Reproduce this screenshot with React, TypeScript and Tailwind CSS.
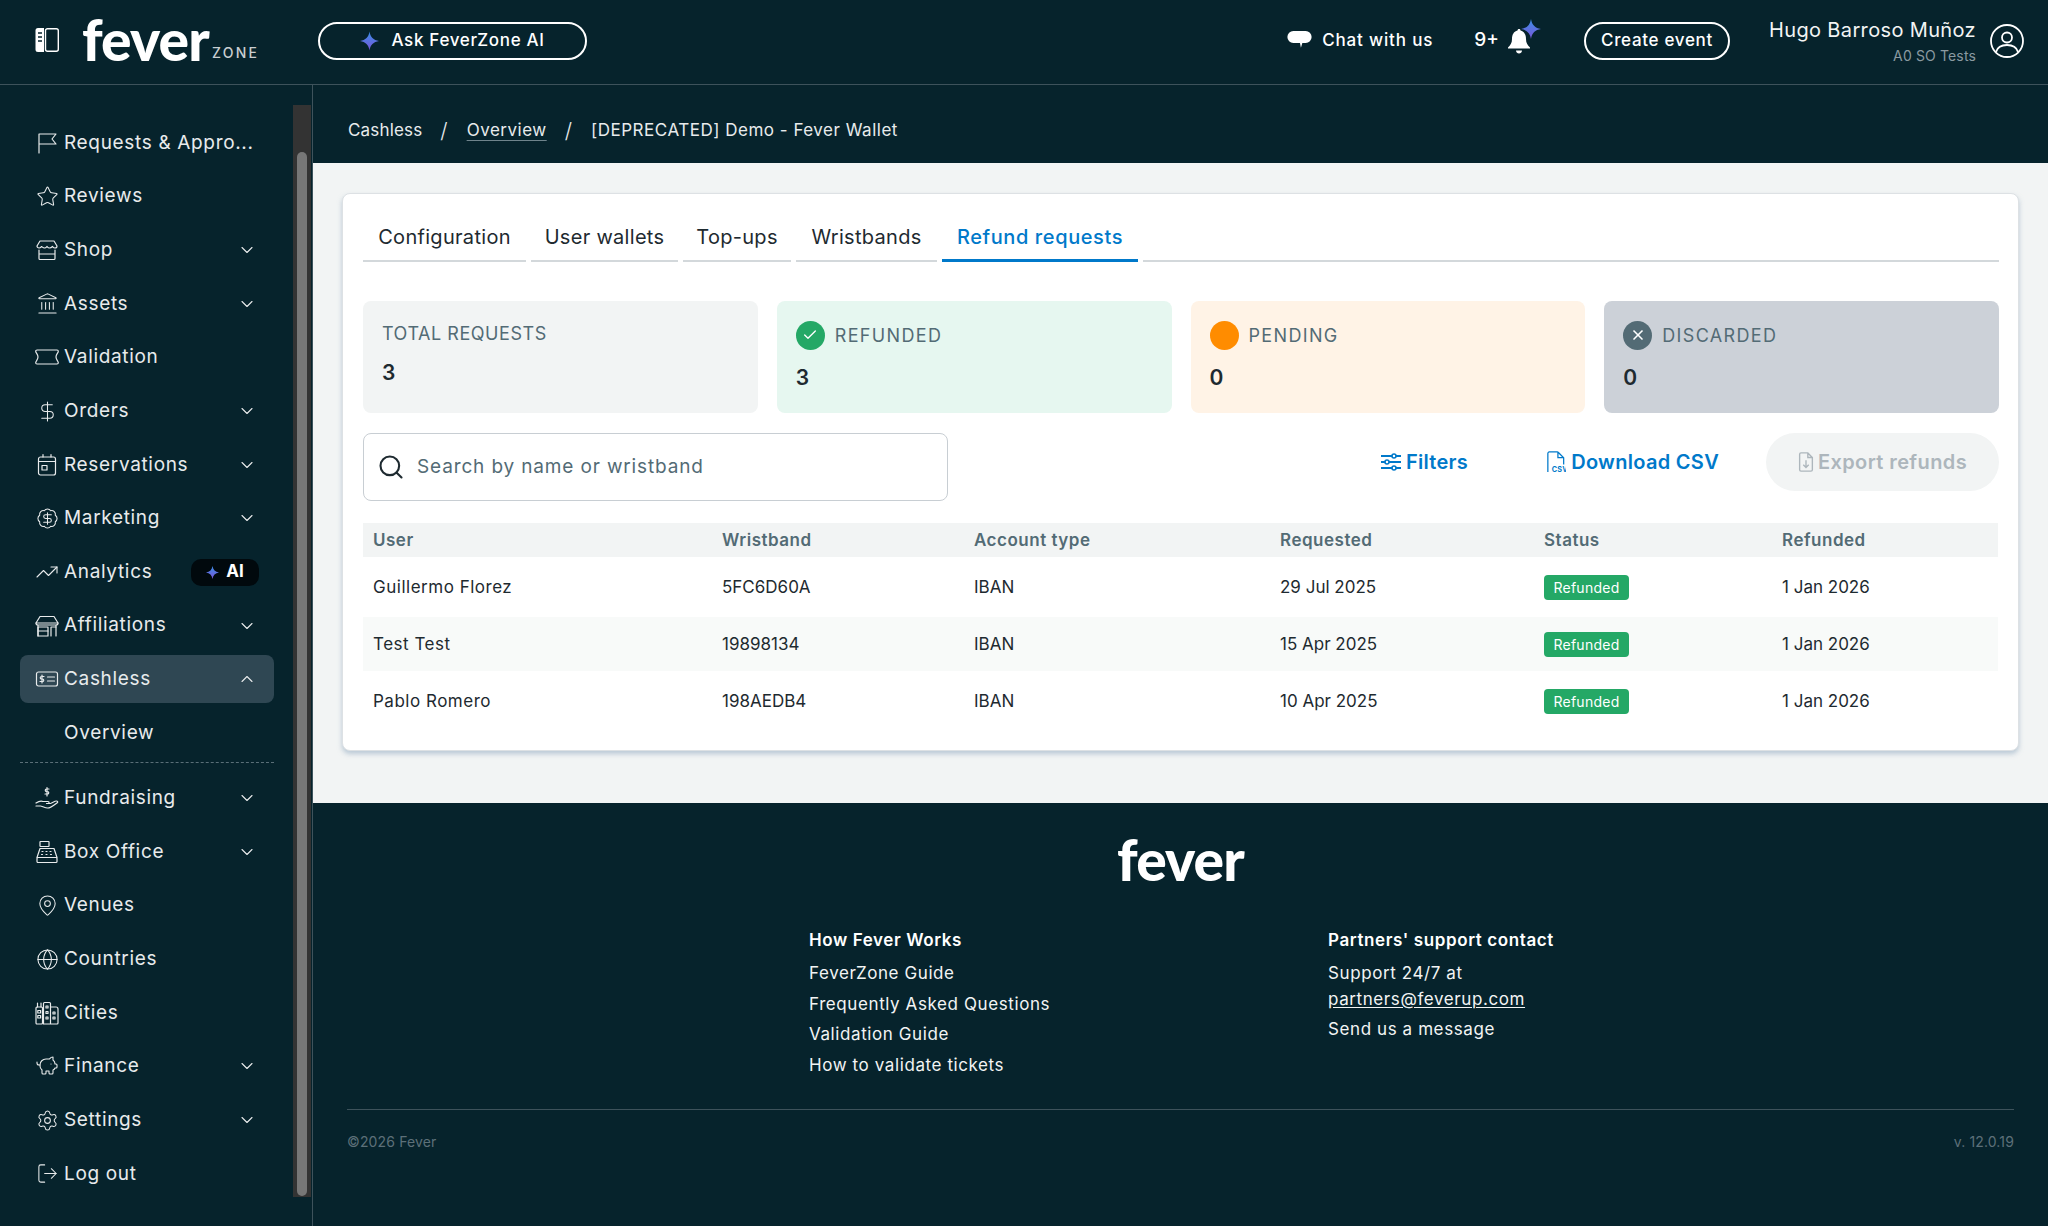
import React from "react";
import { Star, Landmark, BadgeDollarSign, TrendingUp, MapPin, Globe, PiggyBank, Settings, LogOut, ChevronDown, ChevronUp, Search, Check, X, DollarSign } from "lucide-react";

const S = ({ children, className = "w-6 h-6", vb = "0 0 24 24" }: { children: React.ReactNode; className?: string; vb?: string }) => (
  <svg viewBox={vb} fill="none" stroke="currentColor" strokeWidth={1.2} strokeLinecap="round" strokeLinejoin="round" className={className}>{children}</svg>
);

const Sparkle = ({ className, id }: { className: string; id: string }) => (
  <svg viewBox="0 0 24 24" className={className}>
    <defs>
      <linearGradient id={id} x1="0" y1="0" x2="0" y2="1">
        <stop offset="0" stopColor="#3b8fe8" />
        <stop offset="1" stopColor="#7a55d8" />
      </linearGradient>
    </defs>
    <path d="M12 0C13 7 17 11 24 12C17 13 13 17 12 24C11 17 7 13 0 12C7 11 11 7 12 0Z" fill={`url(#${id})`} />
  </svg>
);

const FlagI = () => <S><path d="M4 22V3h17l-4 5 4 5H4" /></S>;
const ShopI = () => <S><path d="M5 3h14l3 5c0 1-1 2-2 2-1.500 0-2-1-2.500-1.500C17 9 16 10 14.500 10S12.500 9 12 8.500C11.500 9 11 10 9.500 10S7.500 9 6.500 8.500C6 9 5.500 10 4 10 3 10 2 9 2 8Z" /><path d="M4 12v8.500c0 .5.500 1 1 1h14c.5 0 1-.5 1-1V12M4 16h16" /></S>;
const TicketI = () => <S><path d="M2 5h20c.7 0 1.300.5 1.300 1.200 0 1.800-2.300 3-2.300 5.800s2.300 4 2.300 5.800c0 .7-.6 1.200-1.300 1.200H2c-.7 0-1.300-.5-1.300-1.200C.7 16 3 14.800 3 12S.7 8 .7 6.200C.7 5.500 1.300 5 2 5Z" /></S>;
const CalI = () => <S><rect x="3.500" y="4" width="17" height="18" rx="2" /><path d="M3.500 8.500h17M8 1.500V4M16 1.500V4" /><rect x="7" y="12.500" width="5" height="4.500" /></S>;
const StoreI = () => <S><path d="M5 2.500h14l4 6.500H1Z" /><path d="M1 9c0 1.500 1 2 2 2h18c1 0 2-.5 2-2M3 11v11M21 11v11" /><rect x="3" y="13" width="10" height="9" /><path d="M3 17h10M16 22v-9h5" /></S>;
const CashI = () => <S><rect x="1.500" y="5" width="21" height="14" rx="2" /><path d="M12.500 10h7M12.500 14h7M9 9.500H6.500a1.200 1.200 0 0 0 0 2.500h1a1.200 1.200 0 0 1 0 2.500H5M7 8v8" /></S>;
const HandI = () => <S><path d="M1 20h4.500c1 0 5 2 7 2 3 0 8-4 10-5.500.5-.5 0-1.500-1-1.500-2 0-4 2-6 2.500h-4M1 17c3-2 5-2.500 7-1.500h5c1.500 0 1.500 2 0 2" /><path d="M14 3h-2.500a1.200 1.200 0 0 0 0 2.500h1a1.200 1.200 0 0 1 0 2.500H10M12 1.500V10" /></S>;
const RegisterI = () => <S><rect x="5" y="1.500" width="9" height="5" rx=".5" /><path d="M5 8.500h14l3 9H2Z" /><rect x="2" y="17.500" width="20" height="5" rx="1" /><path d="M7 11.500h1M11 11.500h1M15 11.500h1M6.500 14.500h1M11 14.500h1M15.500 14.500h1" /></S>;
const CitiesI = () => <S><rect x="1" y="6" width="6.500" height="17" rx="1" /><path d="M2.500 6V2M6 6V2" /><rect x="2.800" y="9.500" width="2.800" height="2.500" /><rect x="2.800" y="14.500" width="2.800" height="2.500" /><path d="M8.500 23V2.500c0-.5.500-1 1-1h5c.5 0 1 .5 1 1V23ZM15.500 6H21c1 0 2 1 2 2v14c0 .5-.5 1-1 1h-6.500" /><rect x="11" y="5" width="2" height="2" /><rect x="11" y="10.500" width="2" height="2" /><rect x="11" y="16" width="2" height="2" /><rect x="18" y="11" width="2" height="2" /><rect x="18" y="16" width="2" height="2" /></S>;

const nav: { label: string; icon: React.ReactNode; chev?: boolean }[] = [
  { label: "Requests & Appro...", icon: <FlagI /> },
  { label: "Reviews", icon: <Star className="w-[23px] h-[23px]" strokeWidth={1.1} /> },
  { label: "Shop", icon: <ShopI />, chev: true },
  { label: "Assets", icon: <Landmark className="w-[23px] h-[23px]" strokeWidth={1.1} />, chev: true },
  { label: "Validation", icon: <TicketI /> },
  { label: "Orders", icon: <DollarSign className="w-[23px] h-[23px]" strokeWidth={1.1} />, chev: true },
  { label: "Reservations", icon: <CalI />, chev: true },
  { label: "Marketing", icon: <BadgeDollarSign className="w-[23px] h-[23px]" strokeWidth={1.1} />, chev: true },
];
const nav2: { label: string; icon: React.ReactNode; chev?: boolean }[] = [
  { label: "Fundraising", icon: <HandI />, chev: true },
  { label: "Box Office", icon: <RegisterI />, chev: true },
  { label: "Venues", icon: <MapPin className="w-[23px] h-[23px]" strokeWidth={1.1} /> },
  { label: "Countries", icon: <Globe className="w-[23px] h-[23px]" strokeWidth={1.1} /> },
  { label: "Cities", icon: <CitiesI /> },
  { label: "Finance", icon: <PiggyBank className="w-[24px] h-[24px]" strokeWidth={1.1} />, chev: true },
  { label: "Settings", icon: <Settings className="w-[23px] h-[23px]" strokeWidth={1.1} />, chev: true },
  { label: "Log out", icon: <LogOut className="w-[23px] h-[23px]" strokeWidth={1.1} /> },
];

const NavRow = ({ label, icon, chev, active, up, badge }: { label: string; icon?: React.ReactNode; chev?: boolean; active?: boolean; up?: boolean; badge?: boolean }) => (
  <div className="h-[53.67px] flex items-center pl-5 shrink-0">
    <div className={`h-12 w-[254px] flex items-center rounded-lg pl-[15px] pr-[17px] ${active ? "bg-[#2f4753]" : ""}`}>
      <span className="w-[24px] flex justify-center shrink-0 text-[#e8ebec]">{icon}</span>
      <span className="ml-[5px] text-[19px] tracking-[0.035em] text-[#e8ebec] whitespace-nowrap">{label}</span>
      {chev && <span className="ml-auto text-[#e8ebec]">{up ? <ChevronUp className="w-5 h-5" strokeWidth={1.3} /> : <ChevronDown className="w-5 h-5" strokeWidth={1.3} />}</span>}
      {badge && (
        <span className="ml-auto mr-[-2px] h-[27px] w-[68px] bg-[#01090d] rounded-[10px] flex items-center justify-center gap-[7px]">
          <Sparkle className="w-[13px] h-[13px]" id="sp-ai" />
          <span className="text-white font-bold text-[17px]">AI</span>
        </span>
      )}
    </div>
  </div>
);

const Logo = () => (
  <span className="font-['Lato',sans-serif] font-black text-[57px] leading-none tracking-[-0.015em] text-white">fever</span>
);

const Stat = ({ label, value, bg, dot, track }: { label: string; value: string; bg: string; dot?: React.ReactNode; track: string }) => (
  <div className={`h-28 rounded-lg px-[19px] ${bg} ${dot ? "pt-[19px]" : "pt-[17px]"}`}>
    <div className="flex items-center gap-[10px] h-[30px]">
      {dot}
      <span className={`text-[18px] text-[#536b75] ${track} ${dot ? "pt-px" : ""}`}>{label}</span>
    </div>
    <div className={`text-[21px] font-semibold text-[#1e2a30] ${dot ? "mt-3" : "mt-[9px]"}`}>{value}</div>
  </div>
);

const rows = [
  ["Guillermo Florez", "5FC6D60A", "IBAN", "29 Jul 2025", "1 Jan 2026"],
  ["Test Test", "19898134", "IBAN", "15 Apr 2025", "1 Jan 2026"],
  ["Pablo Romero", "198AEDB4", "IBAN", "10 Apr 2025", "1 Jan 2026"],
];
const gridCols = "grid grid-cols-[349px_252px_306px_264px_238px_226px] items-center pt-[2px]";
const tabs = [
  ["Configuration", "w-[163px]"],
  ["User wallets", "w-[147px]"],
  ["Top-ups", "w-[108px]"],
  ["Wristbands", "w-[141px]"],
];

export default function App() {
  return (
    <div className="w-[2048px] h-[1226px] overflow-hidden flex flex-col bg-[#06232c] font-['Inter',sans-serif] text-[#1e2a30]">
      <header className="h-[85px] shrink-0 flex items-center border-b border-[#3d525b] text-white">
        <svg viewBox="0 0 24 26" className="w-[24px] h-[26px] ml-[35px] -mt-[5px]">
          <path d="M3 1h6v24H3a2.500 2.500 0 0 1-2.500-2.500v-19A2.500 2.500 0 0 1 3 1Z" fill="#fff" />
          <rect x="10.500" y="1.700" width="12.800" height="22.600" rx="2" fill="none" stroke="#fff" strokeWidth="1.400" />
          <path d="M3 6h4M3 10h4M3 14h4" stroke="#06232c" strokeWidth="1.500" />
        </svg>
        <div className="ml-[23px] flex items-end w-[236px] -mt-[5px]">
          <Logo />
          <span className="ml-[3px] mb-[5px] text-[14px] font-medium tracking-[0.16em] text-[#c9ced1]">ZONE</span>
        </div>
        <button className="h-[38px] w-[269px] rounded-full border-2 border-white flex items-center justify-center gap-[12px] -mt-[3px] text-[17px] font-medium tracking-[0.04em]">
          <Sparkle className="w-[19px] h-[20px]" id="sp-ask" />
          Ask FeverZone AI
        </button>
        <div className="ml-auto flex items-center -mt-[3px]">
          <svg viewBox="0 0 25 20" className="w-[25px] h-[19px]">
            <path d="M6 0h13a6 6 0 0 1 0 12.500h-3.500l-1.500 5-1-5H6A6 6 0 0 1 6 0Z" fill="#fff" />
          </svg>
          <span className="ml-[10px] text-[17px] font-medium tracking-[0.05em]">Chat with us</span>
          <span className="ml-[41px] text-[19px] font-medium">9+</span>
          <span className="relative ml-[8px] w-[24px] h-[26px] block">
            <svg viewBox="0 0 24 26" className="w-[24px] h-[26px]">
              <path d="M12 1c1 0 1.500.7 1.500 1.500C17.500 3.500 19 7 19 11c0 4 1.500 6 4 8.500v1H1v-1C3.500 17 5 15 5 11c0-4 1.500-7.500 5.500-8.500C10.500 1.700 11 1 12 1Z" fill="#fff" />
              <path d="M9 22.500h6c0 2-1.500 3-3 3s-3-1-3-3Z" fill="#fff" />
            </svg>
            <Sparkle className="absolute -top-[9px] left-[14px] w-[20px] h-[20px]" id="sp-bell" />
          </span>
          <button className="ml-[53px] h-[38px] w-[146px] rounded-full border-2 border-white text-[17px] font-medium tracking-[0.04em]">Create event</button>
          <div className="ml-[39px] flex flex-col items-end leading-none mt-[2px]">
            <span className="text-[20px] tracking-[0.018em] text-[#f2f4f4]">Hugo Barroso Muñoz</span>
            <span className="mt-[9px] text-[14px] tracking-[0.01em] text-[#8a9aa1]">A0 SO Tests</span>
          </div>
          <svg viewBox="0 0 34 34" fill="none" stroke="#fff" strokeWidth="1.800" className="ml-[14px] mr-[24px] w-[34px] h-[34px]">
            <circle cx="17" cy="17" r="16" />
            <circle cx="17" cy="13.500" r="5" />
            <path d="M6 28c1.500-5 6-7 11-7s9.500 2 11 7" />
          </svg>
        </div>
      </header>

      <div className="flex-1 flex min-h-0">
        <aside className="w-[313px] shrink-0 flex border-r border-[#3d525b]">
          <nav className="w-[293px] pt-[31px] flex flex-col shrink-0">
            {nav.map((n) => <NavRow key={n.label} {...n} />)}
            <NavRow label="Analytics" icon={<TrendingUp className="w-[24px] h-[24px]" strokeWidth={1.1} />} badge />
            <NavRow label="Affiliations" icon={<StoreI />} chev />
            <NavRow label="Cashless" icon={<CashI />} chev up active />
            <NavRow label="Overview" />
            <div className="ml-5 w-[254px] h-[9.500px] shrink-0 mt-[2px] border-t border-dashed border-[#5a6f78]" />
            {nav2.map((n) => <NavRow key={n.label} {...n} />)}
          </nav>
          <div className="w-[18px] mt-[20px] mb-[29px] bg-[#333333] flex justify-center">
            <div className="w-[10px] mt-[47px] mb-[1px] rounded-full bg-[#777777]" />
          </div>
        </aside>

        <main className="flex-1 min-w-0 flex flex-col">
          <div className="h-[78px] shrink-0 flex items-center pl-[35px] pt-[13px] text-[17px] text-[#e8ebec]">
            <span className="tracking-[0.01em]">Cashless</span>
            <span className="ml-[18px] text-[21px] font-light">/</span>
            <span className="ml-[19px] tracking-[0.03em] underline underline-offset-4 decoration-[#6f848c]">Overview</span>
            <span className="ml-[18px] text-[21px] font-light">/</span>
            <span className="ml-[19px] tracking-[0.03em]">[DEPRECATED] Demo - Fever Wallet</span>
          </div>

          <div className="h-[640px] shrink-0 bg-[#f2f4f4] pt-[30px] pl-[29px] pr-[29px]">
            <section className="h-[558px] bg-white rounded-lg border border-[#dde1e4] shadow-[0_3px_5px_rgba(140,165,190,0.55)] pl-[20px] pr-[19px]">
              <div className="flex h-[68px] items-end gap-[5px]">
                {tabs.map(([t, w]) => (
                  <div key={t} className={`${w} h-[51px] flex items-start justify-center pt-[11px] border-b-2 border-[#d3d8db] text-[20px] tracking-[0.015em]`}>{t}</div>
                ))}
                <div className="w-[196px] h-[51px] flex items-start justify-center pt-[11px] border-b-[3px] border-[#0079ca] text-[20px] font-medium tracking-[0.03em] text-[#0079ca]">Refund requests</div>
                <div className="flex-1 h-[51px] border-b-2 border-[#d3d8db]" />
              </div>

              <div className="mt-[39px] grid grid-cols-4 gap-[19px]">
                <Stat label="TOTAL REQUESTS" value="3" track="tracking-[0.03em]" bg="bg-[#f2f4f4]" />
                <Stat label="REFUNDED" value="3" track="tracking-[0.075em]" bg="bg-[#e6f7f0]" dot={<span className="w-[29px] h-[29px] rounded-full bg-[#24a866] flex items-center justify-center text-white"><Check className="w-4 h-4" strokeWidth={2} /></span>} />
                <Stat label="PENDING" value="0" track="tracking-[0.075em]" bg="bg-[#fff3e6]" dot={<span className="w-[29px] h-[29px] rounded-full bg-[#ff8c00]" />} />
                <Stat label="DISCARDED" value="0" track="tracking-[0.075em]" bg="bg-[#ccd1d8]" dot={<span className="w-[29px] h-[29px] rounded-full bg-[#536b75] flex items-center justify-center text-white"><X className="w-4 h-4" strokeWidth={2.5} /></span>} />
              </div>

              <div className="mt-5 flex items-start">
                <div className="w-[585px] h-[68px] rounded-lg border border-[#c8ced3] flex items-center pl-[13px]">
                  <Search className="w-[28px] h-[28px] text-[#1e2a30]" strokeWidth={1.8} />
                  <span className="ml-[12px] text-[19px] text-[#536b75] tracking-[0.045em]">Search by name or wristband</span>
                </div>
                <div className="ml-auto h-[58px] flex items-center text-[#0079ca] text-[20px] font-semibold tracking-[0.015em]">
                  <svg viewBox="0 0 20 20" fill="none" stroke="currentColor" strokeWidth="2" className="w-[20px] h-[20px]">
                    <path d="M0 4h11M15 4h5M0 10h4M8 10h12M0 16h11M15 16h5" />
                    <circle cx="13" cy="4" r="2" strokeWidth="1.600" />
                    <circle cx="6" cy="10" r="2" strokeWidth="1.600" />
                    <circle cx="13" cy="16" r="2" strokeWidth="1.600" />
                  </svg>
                  <span className="ml-[5px]">Filters</span>
                  <svg viewBox="0 0 20 24" fill="none" stroke="currentColor" strokeWidth="1.300" className="ml-[78px] w-[20px] h-[23px]">
                    <path d="M12 1H3a1.500 1.500 0 0 0-1.500 1.500V22M12 1l6 6v7M12 1v6h6" />
                    <text x="5.500" y="22" fontSize="7.500" fontWeight="700" fill="currentColor" stroke="none">CSV</text>
                  </svg>
                  <span className="ml-[5px]">Download CSV</span>
                  <div className="ml-[47px] w-[233px] h-[58px] rounded-full bg-[#f2f4f4] flex items-center justify-center text-[#adb6bc]">
                    <svg viewBox="0 0 16 22" fill="none" stroke="currentColor" strokeWidth="1.500" className="w-[16px] h-[20px]">
                      <path d="M10 1H2.500A1.500 1.500 0 0 0 1 2.500v17A1.500 1.500 0 0 0 2.500 21h11a1.500 1.500 0 0 0 1.500-1.500V6ZM10 1v5h5M8 9v8M5 14l3 3 3-3" />
                    </svg>
                    <span className="ml-[4px] tracking-[0.02em]">Export refunds</span>
                  </div>
                </div>
              </div>

              <div className="mt-[22px] w-[1635px] text-[17px]">
                <div className={`${gridCols} h-[34px] bg-[#f2f4f4] font-semibold tracking-[0.03em] text-[#536b75]`}>
                  {["User", "Wristband", "Account type", "Requested", "Status", "Refunded"].map((h) => (
                    <div key={h} className="pl-[10px]">{h}</div>
                  ))}
                </div>
                <div className="mt-[3px] flex flex-col gap-[3px]">
                  {rows.map((r, i) => (
                    <div key={r[0]} className={`${gridCols} h-[54px] ${i === 1 ? "bg-[#f8faf9]" : ""}`}>
                      <div className="pl-[10px] tracking-[0.03em]">{r[0]}</div>
                      <div className="pl-[10px]">{r[1]}</div>
                      <div className="pl-[10px]">{r[2]}</div>
                      <div className="pl-[10px]">{r[3]}</div>
                      <div className="pl-[10px]">
                        <span className="inline-flex w-[85px] h-[25px] items-center justify-center rounded bg-[#24a866] text-white text-[14px] tracking-[0.02em]">Refunded</span>
                      </div>
                      <div className="pl-[10px]">{r[4]}</div>
                    </div>
                  ))}
                </div>
              </div>
            </section>
          </div>

          <footer className="flex-1 flex flex-col text-[#f2f4f4]">
            <div className="flex justify-center mt-[27px] h-[59px] items-center"><Logo /></div>
            <div className="mt-[39px] flex text-[17px] tracking-[0.035em] pl-[496px]">
              <div className="w-[519px] flex flex-col">
                <div className="h-[24px] leading-[24px] font-semibold text-white">How Fever Works</div>
                <div className="mt-[6px] h-[30.500px] leading-[30px]">FeverZone Guide</div>
                <div className="h-[30.500px] leading-[30px]">Frequently Asked Questions</div>
                <div className="h-[30.500px] leading-[30px]">Validation Guide</div>
                <div className="h-[30.500px] leading-[30px]">How to validate tickets</div>
              </div>
              <div className="flex flex-col">
                <div className="h-[24px] leading-[24px] font-semibold text-white">Partners' support contact</div>
                <div className="mt-[6px] h-[30px] leading-[30px]">Support 24/7 at</div>
                <div className="h-[26px] leading-[22px] underline underline-offset-2">partners@feverup.com</div>
                <div className="h-[30px] leading-[30px]">Send us a message</div>
              </div>
            </div>
            <div className="mx-[34px] mt-[29px] border-t border-[#3d525b] flex justify-between pt-[21px] text-[14px] tracking-[0.01em] text-[#5d7079]">
              <span>©2026 Fever</span>
              <span>v. 12.0.19</span>
            </div>
          </footer>
        </main>
      </div>
    </div>
  );
}
